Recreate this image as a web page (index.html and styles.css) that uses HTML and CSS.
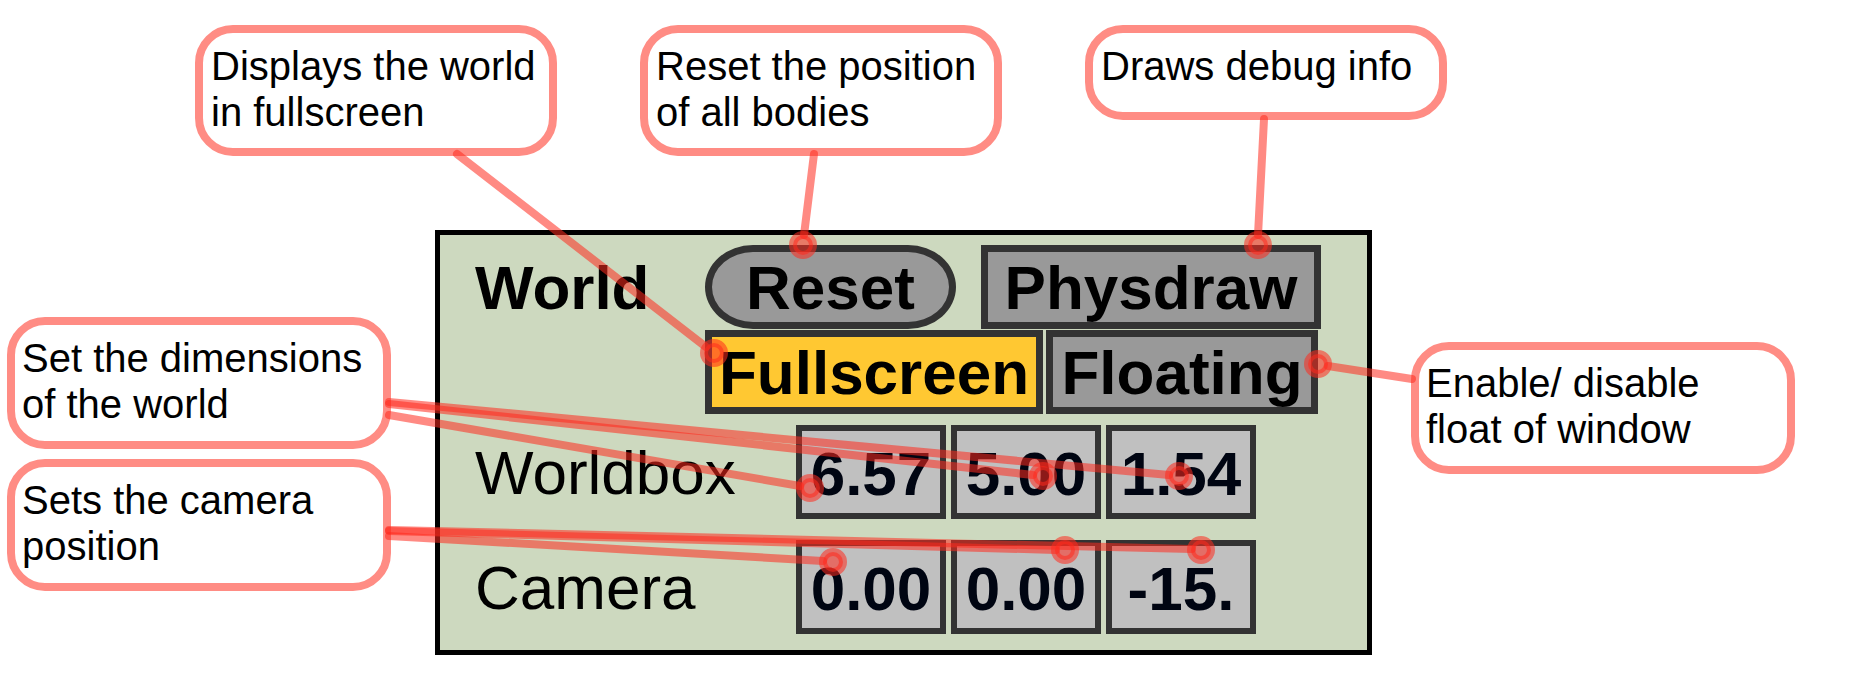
FILE: index.html
```html
<!DOCTYPE html>
<html lang="en">
<head>
<meta charset="utf-8">
<title>World panel</title>
<link rel="stylesheet" href="styles.css">
</head>
<body>
<main class="diagram">
  <div class="notes-top">
    <p class="note">Displays the world<br>in fullscreen</p>
    <p class="note">Reset the position<br>of all bodies</p>
    <p class="note note-short">Draws debug info</p>
  </div>
  <div class="middle">
    <div class="notes-left">
      <p class="note note-wide">Set the dimensions<br>of the world</p>
      <p class="note note-wide">Sets the camera<br>position</p>
    </div>
    <section class="panel" aria-labelledby="world">
      <div class="row row-world">
        <h1 class="title" id="world">World</h1>
        <div class="actions">
          <div class="action-line action-line-spread">
            <button class="btn btn-round" type="button">Reset</button>
            <button class="btn btn-physdraw" type="button">Physdraw</button>
          </div>
          <div class="action-line">
            <button class="btn btn-fullscreen" type="button" aria-pressed="true">Fullscreen</button>
            <button class="btn btn-floating" type="button">Floating</button>
          </div>
        </div>
      </div>
      <div class="row row-box">
        <label class="label" for="box-x">Worldbox</label>
        <div class="fields">
          <input class="field" id="box-x" type="text" value="6.57">
          <input class="field" type="text" value="5.00" aria-label="Worldbox y">
          <input class="field" type="text" value="1.54" aria-label="Worldbox z">
        </div>
      </div>
      <div class="row row-camera">
        <label class="label" for="cam-x">Camera</label>
        <div class="fields">
          <input class="field" id="cam-x" type="text" value="0.00">
          <input class="field" type="text" value="0.00" aria-label="Camera y">
          <input class="field" type="text" value="-15." aria-label="Camera z">
        </div>
      </div>
    </section>
    <div class="notes-right">
      <p class="note note-wide">Enable/ disable<br>float of window</p>
    </div>
  </div>
  <svg class="pointers" width="1810" height="680" viewBox="0 0 1810 680" aria-hidden="true">
    <line x1="457" y1="154" x2="706" y2="347"/>
    <line x1="814" y1="154" x2="804" y2="235"/>
    <line x1="1264" y1="119" x2="1258" y2="235"/>
    <line x1="1412" y1="379" x2="1328" y2="366"/>
    <line x1="389" y1="415" x2="800" y2="486"/>
    <line x1="389" y1="404" x2="1033" y2="475"/>
    <line x1="389" y1="402" x2="1169" y2="475"/>
    <line x1="389" y1="536" x2="823" y2="561"/>
    <line x1="389" y1="531" x2="1056" y2="550"/>
    <line x1="389" y1="530" x2="1192" y2="549"/>
    <circle cx="714" cy="353" r="10"/>
    <circle cx="803" cy="245" r="10"/>
    <circle cx="1258" cy="245" r="10"/>
    <circle cx="1318" cy="364" r="10"/>
    <circle cx="810" cy="488" r="10"/>
    <circle cx="1043" cy="476" r="10"/>
    <circle cx="1179" cy="476" r="10"/>
    <circle cx="833" cy="562" r="10"/>
    <circle cx="1065" cy="550" r="10"/>
    <circle cx="1201" cy="550" r="10"/>
  </svg>
</main>
</body>
</html>
```
FILE: styles.css
```css
* {
  box-sizing: border-box;
}

body {
  margin: 0;
  background: #fff;
  color: #000;
  font-family: "Liberation Sans", Arial, sans-serif;
}

.diagram {
  position: relative;
  display: flex;
  flex-direction: column;
  gap: 74px;
  padding: 25px 0 32px 7px;
}

.notes-top {
  display: flex;
  align-items: flex-start;
  gap: 83px;
  padding-left: 188px;
}

.middle {
  display: flex;
  align-items: flex-start;
}

.notes-left {
  display: flex;
  flex-direction: column;
  gap: 10px;
  padding-top: 87px;
  margin-right: 44px;
}

.notes-right {
  padding-top: 112px;
  margin-left: 39px;
}

.note {
  width: 362px;
  min-height: 131px;
  margin: 0;
  padding: 10px 0 0 8px;
  border: 8px solid #ff8c84;
  border-radius: 38px;
  font-size: 40px;
  line-height: 46px;
  white-space: nowrap;
}

.note-short {
  min-height: 95px;
}

.note-wide {
  width: 384px;
  min-height: 132px;
  padding-left: 7px;
}

.panel {
  width: 937px;
  padding: 10px 32px 16px 35px;
  border: 5px solid #000;
  background: #cdd9bf;
  font-size: 62px;
}

.row {
  display: flex;
  align-items: flex-start;
}

.row-box {
  margin-top: 11px;
}

.row-camera {
  margin-top: 21px;
}

.title {
  width: 230px;
  margin: 0;
  font-size: 62px;
  line-height: 86px;
}

.label {
  width: 321px;
  line-height: 96px;
  height: 94px;
}

.actions {
  display: flex;
  flex-direction: column;
  gap: 1px;
}

.action-line {
  display: flex;
  gap: 3px;
}

.action-line-spread {
  gap: 25px;
}

.btn {
  height: 84px;
  padding: 2px 0 0;
  border: 7px solid #333;
  background: #999;
  color: #000;
  font: bold 62px/68px "Liberation Sans", Arial, sans-serif;
}

.btn-round {
  width: 251px;
  border-radius: 48px / 42px;
}

.btn-physdraw {
  width: 340px;
}

.btn-fullscreen {
  width: 338px;
  background: #ffc832;
}

.btn-floating {
  width: 272px;
}

.fields {
  display: flex;
  gap: 5px;
}

.field {
  width: 150px;
  height: 94px;
  padding: 2px 0 0;
  border: 6px solid #333;
  border-radius: 0;
  background: #c0c0c0;
  color: #000512;
  font: bold 62px/80px "Liberation Sans", Arial, sans-serif;
  text-align: center;
}

.pointers {
  position: absolute;
  top: 0;
  left: 0;
  pointer-events: none;
  fill: rgba(255, 42, 30, 0.55);
  stroke: rgba(255, 42, 30, 0.55);
  stroke-width: 8px;
  stroke-linecap: round;
}
```
